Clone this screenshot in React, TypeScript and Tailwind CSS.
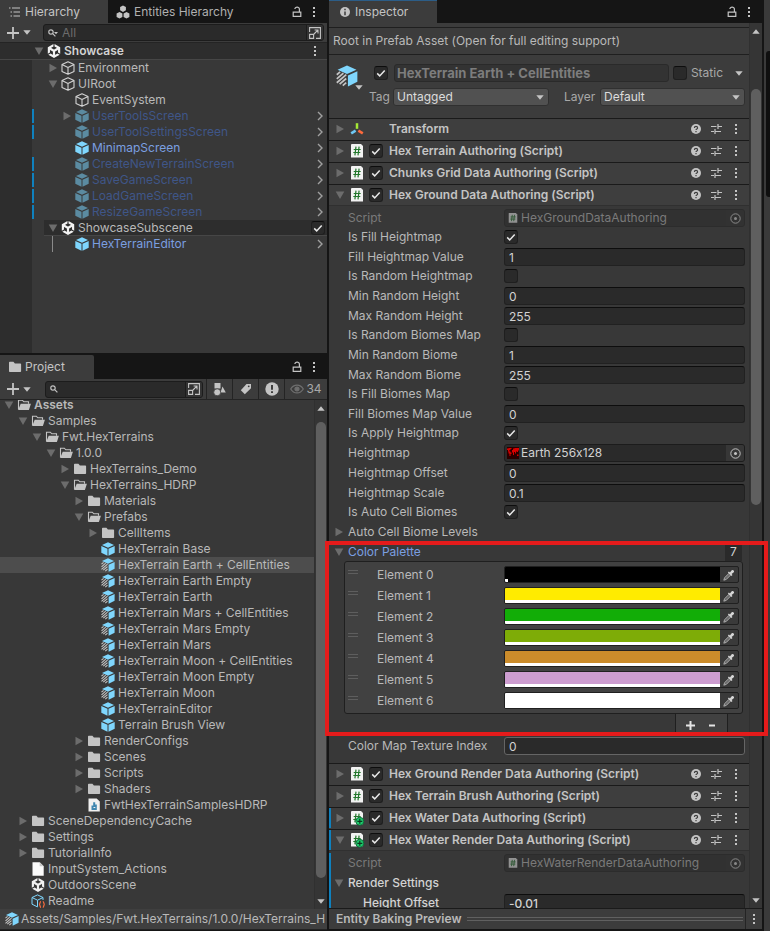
import { useState } from "react";
import type { ReactNode } from "react";
import clsx from "clsx";
import { SiUnity } from "react-icons/si";

type IconName =
  | "cube"
  | "prefab"
  | "prefabOff"
  | "variant"
  | "unity"
  | "folder"
  | "folderOpen"
  | "assembly"
  | "file"
  | "readme";

type TreeItem = {
  label: string;
  depth: number;
  icon: IconName;
  open?: boolean;
  bold?: boolean;
  selected?: boolean;
};

const HIERARCHY: (TreeItem & { color?: string; marked?: boolean; next?: boolean })[] = [
  { label: "Environment", depth: 1, icon: "cube", open: false },
  { label: "UIRoot", depth: 1, icon: "cube", open: true },
  { label: "EventSystem", depth: 2, icon: "cube" },
  { label: "UserToolsScreen", depth: 2, icon: "prefabOff", open: false, color: "text-[#3f5688]", marked: true, next: true },
  { label: "UserToolSettingsScreen", depth: 2, icon: "prefabOff", color: "text-[#3f5688]", marked: true, next: true },
  { label: "MinimapScreen", depth: 2, icon: "prefab", color: "text-[#7b9fe0]", next: true },
  { label: "CreateNewTerrainScreen", depth: 2, icon: "prefabOff", color: "text-[#3f5688]", marked: true, next: true },
  { label: "SaveGameScreen", depth: 2, icon: "prefabOff", color: "text-[#3f5688]", marked: true, next: true },
  { label: "LoadGameScreen", depth: 2, icon: "prefabOff", color: "text-[#3f5688]", marked: true, next: true },
  { label: "ResizeGameScreen", depth: 2, icon: "prefabOff", color: "text-[#3f5688]", marked: true, next: true },
];

const ASSETS: TreeItem[] = [
  { label: "Assets", depth: 0, icon: "folderOpen", open: true, bold: true },
  { label: "Samples", depth: 1, icon: "folderOpen", open: true },
  { label: "Fwt.HexTerrains", depth: 2, icon: "folderOpen", open: true },
  { label: "1.0.0", depth: 3, icon: "folderOpen", open: true },
  { label: "HexTerrains_Demo", depth: 4, icon: "folder", open: false },
  { label: "HexTerrains_HDRP", depth: 4, icon: "folderOpen", open: true },
  { label: "Materials", depth: 5, icon: "folder", open: false },
  { label: "Prefabs", depth: 5, icon: "folderOpen", open: true },
  { label: "CellItems", depth: 6, icon: "folder", open: false },
  { label: "HexTerrain Base", depth: 6, icon: "prefab" },
  { label: "HexTerrain Earth + CellEntities", depth: 6, icon: "variant", selected: true },
  { label: "HexTerrain Earth Empty", depth: 6, icon: "variant" },
  { label: "HexTerrain Earth", depth: 6, icon: "variant" },
  { label: "HexTerrain Mars + CellEntities", depth: 6, icon: "variant" },
  { label: "HexTerrain Mars Empty", depth: 6, icon: "variant" },
  { label: "HexTerrain Mars", depth: 6, icon: "variant" },
  { label: "HexTerrain Moon + CellEntities", depth: 6, icon: "variant" },
  { label: "HexTerrain Moon Empty", depth: 6, icon: "variant" },
  { label: "HexTerrain Moon", depth: 6, icon: "variant" },
  { label: "HexTerrainEditor", depth: 6, icon: "prefab" },
  { label: "Terrain Brush View", depth: 6, icon: "prefab" },
  { label: "RenderConfigs", depth: 5, icon: "folder", open: false },
  { label: "Scenes", depth: 5, icon: "folder", open: false },
  { label: "Scripts", depth: 5, icon: "folder", open: false },
  { label: "Shaders", depth: 5, icon: "folder", open: false },
  { label: "FwtHexTerrainSamplesHDRP", depth: 5, icon: "assembly" },
  { label: "SceneDependencyCache", depth: 1, icon: "folder", open: false },
  { label: "Settings", depth: 1, icon: "folder", open: false },
  { label: "TutorialInfo", depth: 1, icon: "folder", open: false },
  { label: "InputSystem_Actions", depth: 1, icon: "file" },
  { label: "OutdoorsScene", depth: 1, icon: "unity" },
  { label: "Readme", depth: 1, icon: "readme" },
];

const PALETTE = ["#000000", "#ffeb00", "#12ad07", "#7eac07", "#cb8c2b", "#cd9dd0", "#ffffff"];

const INDENT = ["pl-[3px]", "pl-[17px]", "pl-[31px]", "pl-[45px]", "pl-[59px]", "pl-[73px]", "pl-[87px]"];

function Cube({ kind, className = "size-[14px]" }: { kind: IconName; className?: string }) {
  if (kind === "cube") {
    return (
      <svg viewBox="0 0 14 14" className={className} fill="none" stroke="#d2d2d2" strokeWidth="1.1" strokeLinejoin="round">
        <path d="M7 .8 13 3.6v6.8L7 13.3 1 10.4V3.6zM1 3.6l6 2.9 6-2.9M7 6.5v6.8" />
      </svg>
    );
  }
  if (kind === "variant") {
    return (
      <svg viewBox="0 0 14 14" className={className}>
        <path d="M7 .3 13 3 7 5.8 1 3z" fill="#7fd6fd" />
        <path d="M7.6 6.7 13.6 4v6.7l-6 3z" fill="#7fd6fd" />
        <path d="M.5 6.2 2.6 4.4M.5 8.8l4.2-3.6M.5 11.3l6-5.2M2.3 12.2l4.2-3.6M4.3 13.1l2.2-1.9" stroke="#c4c4c4" strokeWidth="1.1" />
      </svg>
    );
  }
  const fill = kind === "prefab" ? "#7fd6fd" : "#5b8ba1";
  return (
    <svg viewBox="0 0 14 14" className={className} fill={fill}>
      <path d="M7 .3 13 3 7 5.8 1 3z" />
      <path d="M.3 4l6.2 2.7v7L.3 10.7z" />
      <path d="M13.7 4 7.5 6.7v7l6.2-3z" />
    </svg>
  );
}

function TreeIcon({ name }: { name: IconName }) {
  switch (name) {
    case "unity":
      return <SiUnity className="size-[14px] text-[#f2f2f2]" />;
    case "folder":
      return (
        <svg viewBox="0 0 14 14" className="size-[14px]" fill="#c4c4c4">
          <path d="M1 2.5a.8.8 0 0 1 .8-.8h3.6l1.5 1.7h5.4a.8.8 0 0 1 .8.8v7.1a.8.8 0 0 1-.8.8H1.8a.8.8 0 0 1-.8-.8z" />
        </svg>
      );
    case "folderOpen":
      return (
        <svg viewBox="0 0 14 14" className="size-[14px]">
          <path d="M1.5 11.5V2.2h3.8l1.5 1.6h4.7v2" fill="none" stroke="#c4c4c4" strokeWidth="1.1" />
          <path d="M3.7 5.8h10.2l-2 6.3H1.2z" fill="#c4c4c4" />
        </svg>
      );
    case "assembly":
      return (
        <svg viewBox="0 0 14 14" className="size-[14px]">
          <path d="M1.5.5h8.2L12.8 3.5v10H1.5z" fill="#f0f0f0" />
          <path d="M6.2 4.2h2v2.200h1.600v5.600H4.500V7.500h1.700z" fill="#3f86b0" />
          <path d="M6.500 9.500h1.800" stroke="#f0f0f0" strokeWidth="1" fill="none" />
        </svg>
      );
    case "file":
      return (
        <svg viewBox="0 0 14 14" className="size-[14px]">
          <path d="M1.5.3h7.2l4 4v9.5H1.5z" fill="#fbfbfb" />
          <path d="M8.7.3v4h4z" fill="#c6c6c6" />
        </svg>
      );
    case "readme":
      return (
        <svg viewBox="0 0 14 14" className="size-[14px]" fill="none">
          <path d="M12 6V3.5L6.5.9 1 3.5v6.7l5.5 2.7M1 3.5l5.5 2.7L12 3.5M6.5 6.2v6.6" stroke="#7fd6fd" strokeWidth="1" />
          <path d="M10 7.5c-1.4 0-.6 2.6-1.8 2.9 1.2.3.4 2.9 1.8 2.9M11.8 7.5c1.4 0 .6 2.6 1.8 2.9-1.2.3-.4 2.9-1.8 2.9" stroke="#ff6e40" strokeWidth="1.2" />
        </svg>
      );
    default:
      return <Cube kind={name} />;
  }
}

function Arrow({ open }: { open?: boolean }) {
  return (
    <svg viewBox="0 0 10 10" className="size-[10px]" fill="#6c6c6c">
      {open ? <path d="M.7 1.5h8.6L5 9z" /> : <path d="M1.5.8v8.4L9 5z" />}
    </svg>
  );
}

function Foldout({ open, label }: { open?: boolean; label: string }) {
  return (
    <button type="button" aria-label={label} aria-expanded={open} className="flex size-[11px] shrink-0 items-center justify-center">
      <Arrow open={open} />
    </button>
  );
}

function TreeLabel({ item, className }: { item: TreeItem; className?: string }) {
  return (
    <>
      {item.open === undefined ? <span className="w-[11px] shrink-0" /> : <Foldout open={item.open} label={item.label} />}
      <span className="ml-[3px] mr-[3px] shrink-0">
        <TreeIcon name={item.icon} />
      </span>
      <span className={clsx("whitespace-nowrap", item.bold && "font-semibold", className)}>{item.label}</span>
    </>
  );
}

function LockIcon() {
  return (
    <svg viewBox="0 0 10 12" className="h-[12px] w-[10px]" fill="none" stroke="#c4c4c4" strokeWidth="1.2">
      <path d="M1.2 6.2h7.6v4.2H1.2zM7.4 6V3.2C7.4 1.8 6.3 1.2 5.1 1.2S2.9 1.8 2.9 3" />
    </svg>
  );
}

function Kebab() {
  return (
    <svg viewBox="0 0 4 12" className="h-[12px] w-[4px]" fill="#c4c4c4">
      <path d="M1 1h2v2H1zM1 5h2v2H1zM1 9h2v2H1z" />
    </svg>
  );
}

function Caret({ className }: { className?: string }) {
  return (
    <svg viewBox="0 0 8 5" className={clsx("h-[5px] w-[8px]", className)} fill="#c4c4c4">
      <path d="M.3.3h7.4L4 4.7z" />
    </svg>
  );
}

function TabTools() {
  return (
    <div className="ml-auto flex items-center gap-[10px] pr-[11px]">
      <button type="button" aria-label="Lock">
        <LockIcon />
      </button>
      <button type="button" aria-label="Tab menu">
        <Kebab />
      </button>
    </div>
  );
}

function AddButton() {
  return (
    <button type="button" aria-label="Create" className="flex w-[43px] shrink-0 items-center gap-[4px] pl-[7px]">
      <svg viewBox="0 0 12 12" className="size-[12px]" stroke="#c4c4c4" strokeWidth="1.8">
        <path d="M6 0v12M0 6h12" />
      </svg>
      <Caret />
    </button>
  );
}

function SearchIcon({ menu }: { menu?: boolean }) {
  return (
    <svg viewBox="0 0 10 8" className="h-[8px] w-[10px] shrink-0" fill="none" stroke="#c4c4c4" strokeWidth="1.2">
      <circle cx="3" cy="3" r="2.2" />
      <path d="M4.7 4.7 7.4 7.4" />
      {menu && <path d="M6 3h4L8 5.2z" fill="#c4c4c4" stroke="none" />}
    </svg>
  );
}

function SearchField({ label, placeholder, menu }: { label: string; placeholder?: string; menu?: boolean }) {
  const [query, setQuery] = useState("");
  return (
    <div className="flex h-[17px] min-w-0 flex-1 items-center overflow-hidden rounded-[3px] border border-[#1c1c1c] bg-[#2a2a2a]">
      <div className="flex min-w-0 flex-1 items-center gap-1 pl-1">
        <SearchIcon menu={menu} />
        <input
          type="text"
          aria-label={label}
          placeholder={placeholder}
          value={query}
          onChange={(e) => setQuery(e.target.value)}
          className="w-full min-w-0 bg-transparent text-[#c4c4c4] outline-none placeholder:text-[#6c6c6c]"
        />
      </div>
      <button type="button" aria-label="Open in search window" className="flex h-full w-[17px] shrink-0 items-center justify-center border-l border-[#1c1c1c] bg-[#333333]">
        <svg viewBox="0 0 12 12" className="size-[12px]" fill="none" stroke="#c4c4c4" strokeWidth="1.1">
          <path d="M.6 5V.6h10.8v10.8H7M.6 7.4h4v4h-4zM5 7l3.8-3.8M5.6 3h3.4v3.4" />
        </svg>
      </button>
    </div>
  );
}

function Check({ id, label, defaultChecked }: { id?: string; label?: string; defaultChecked?: boolean }) {
  return (
    <span className="relative flex size-[14px] shrink-0">
      <input
        id={id}
        type="checkbox"
        aria-label={label}
        defaultChecked={defaultChecked}
        className="peer size-[14px] appearance-none rounded-[3px] border border-[#1f1f1f] border-t-[#0d0d0d] bg-[#2a2a2a]"
      />
      <svg
        viewBox="0 0 14 14"
        className="pointer-events-none absolute inset-0 hidden size-[14px] peer-checked:block"
        fill="none"
        stroke="#e8e8e8"
        strokeWidth="1.5"
      >
        <path d="M3.2 7.4 5.7 9.9 10.7 4.4" />
      </svg>
    </span>
  );
}

function Chevron() {
  return (
    <button type="button" aria-label="Open prefab" className="ml-auto mr-1">
      <svg viewBox="0 0 6 10" className="h-[10px] w-[6px]" fill="none" stroke="#a0a0a0" strokeWidth="1.4">
        <path d="M1 1l4 4-4 4" />
      </svg>
    </button>
  );
}

function Hierarchy() {
  return (
    <section className="flex h-[353px] flex-col bg-[#383838]">
      <div className="flex h-[23px] shrink-0 items-center bg-[#151515]">
        <button type="button" className="flex h-full w-[108px] items-center gap-[5px] bg-[#3c3c3c] pl-[9px] text-[#c4c4c4]">
          <svg viewBox="0 0 11 10" className="h-[10px] w-[11px]" stroke="#c4c4c4" strokeWidth="1.2">
            <path d="M0 1h1.5M3 1h8M1.5 5H3M4.5 5H11M1.5 9H3M4.5 9H11" />
          </svg>
          Hierarchy
        </button>
        <button type="button" className="flex h-full items-center gap-1 pl-[8px] text-[#b0b0b0]">
          <svg viewBox="0 0 14 14" className="size-[14px]" fill="#c4c4c4">
            <path d="M7 .5 9.9 2v3.3L7 6.9 4.1 5.3V2zM3.5 7l2.9 1.6v3.3L3.5 13.5.6 11.9V8.6zM10.5 7l2.9 1.6v3.3l-2.9 1.6-2.9-1.6V8.6z" />
          </svg>
          Entities Hierarchy
        </button>
        <TabTools />
      </div>
      <div className="flex h-[20px] shrink-0 items-center border-b border-[#242424] bg-[#3c3c3c] pr-[3px]">
        <AddButton />
        <SearchField label="Search hierarchy" placeholder="All" menu />
      </div>
      <div className="flex min-h-0 min-w-0 flex-1 flex-col bg-[linear-gradient(to_right,#2d2d2d_32px,#383838_32px)]">
        <div className="flex h-[17px] items-center border-b border-[#464646] bg-[#2d2d2d] pl-[33px] pr-[10px] text-[#d2d2d2]">
          <TreeLabel item={{ label: "Showcase", depth: 0, icon: "unity", open: true, bold: true }} />
          <button type="button" aria-label="Scene menu" className="ml-auto">
            <Kebab />
          </button>
        </div>
        <ul className="pl-[30px]">
          {HIERARCHY.map((item) => (
            <li key={item.label} className="flex h-[16px] items-center">
              <span className={clsx("ml-[2px] -mr-[4px] h-[14px] w-[2px] shrink-0", item.marked && "bg-[#0f81be]")} />
              <div className={clsx("flex min-w-0 flex-1 items-center", INDENT[item.depth])}>
                <TreeLabel item={item} className={item.color ?? "text-[#b9b9b9]"} />
                {item.next && <Chevron />}
              </div>
            </li>
          ))}
        </ul>
        <div className="ml-[44px] flex h-[16px] items-center border-b border-[#464646] bg-[#2d2d2d] pl-[3px] pr-[2px] text-[#b9b9b9]">
          <TreeLabel item={{ label: "ShowcaseSubscene", depth: 1, icon: "unity", open: true }} />
          <span className="ml-auto flex">
            <Check label="Open subscene" defaultChecked />
          </span>
        </div>
        <div className="ml-[52px] flex h-[16px] items-center border-l border-[#8a8a8a] pl-[8px]">
          <TreeLabel item={{ label: "HexTerrainEditor", depth: 2, icon: "prefab" }} className="text-[#7b9fe0]" />
          <Chevron />
        </div>
      </div>
    </section>
  );
}

function Scrollbar({ thumb }: { thumb: string }) {
  return (
    <div className="flex w-[13px] shrink-0 flex-col items-center border-l border-[#303030] bg-[#353535]">
      <Caret className="mt-[6px] rotate-180" />
      <div className={clsx("w-[10px] rounded-[5px] bg-[#5f5f5f]", thumb)} />
      <Caret className="mt-auto mb-[5px]" />
    </div>
  );
}

function Project() {
  return (
    <section className="flex min-h-0 flex-1 flex-col bg-[#383838]">
      <div className="flex h-[24px] shrink-0 items-center bg-[#151515]">
        <button type="button" className="flex h-full w-[94px] items-center gap-[3px] rounded-tr-[2px] bg-[#3c3c3c] pl-2 text-[#c4c4c4]">
          <TreeIcon name="folder" />
          Project
        </button>
        <TabTools />
      </div>
      <div className="flex h-[21px] shrink-0 items-center border-b border-[#242424] bg-[#3c3c3c]">
        <AddButton />
        <div className="flex min-w-0 flex-1 pl-[2px] pr-[3px]">
          <SearchField label="Search project" />
        </div>
        <button type="button" aria-label="Search by type" className="flex h-full w-[26px] items-center justify-center border-l border-[#242424]">
          <svg viewBox="0 0 13 13" className="size-[13px]" fill="#c4c4c4">
            <path d="M1.5 0h6v5.5h-6zM9.5 3.5 12.8 9.5H7.5z" />
            <circle cx="4.2" cy="9.3" r="3.5" stroke="#3c3c3c" strokeWidth=".8" />
          </svg>
        </button>
        <button type="button" aria-label="Search by label" className="flex h-full w-[26px] items-center justify-center border-l border-[#242424]">
          <svg viewBox="0 0 12 12" className="size-[12px]">
            <path d="M6.5 1h4.5v4.2L4.8 11.2.8 7.2z" fill="#c4c4c4" />
            <circle cx="8.7" cy="3.3" r=".9" fill="#3c3c3c" />
          </svg>
        </button>
        <button type="button" aria-label="Show log entries" className="flex h-full w-[26px] items-center justify-center border-l border-[#242424]">
          <svg viewBox="0 0 14 14" className="size-[14px]">
            <circle cx="7" cy="7" r="6.7" fill="#c4c4c4" />
            <path d="M7 3v4.8M7 9.2v1.9" stroke="#3c3c3c" strokeWidth="2" />
          </svg>
        </button>
        <button type="button" className="flex h-full w-[43px] items-center justify-center gap-[2px] border-l border-[#242424] text-[#a8a8a8]">
          <svg viewBox="0 0 14 10" className="h-[10px] w-[14px]" fill="none" stroke="#6f6f6f" strokeWidth="1.2">
            <path d="M.7 5C3.8-.2 10.2-.2 13.3 5 10.2 10.2 3.8 10.2.7 5z" />
            <circle cx="7" cy="5" r="2" fill="#6f6f6f" />
          </svg>
          34
        </button>
      </div>
      <div className="flex min-h-0 flex-1">
        <ul className="min-w-0 flex-1 overflow-hidden">
          {ASSETS.map((item, i) => (
            <li
              key={i}
              className={clsx(
                "flex h-[16px] items-center text-[#b9b9b9] first:-mt-[3px]",
                INDENT[item.depth],
                item.selected && "bg-[#4d4d4d]",
              )}
            >
              <TreeLabel item={item} />
            </li>
          ))}
        </ul>
        <Scrollbar thumb="mt-[11px] h-[456px]" />
      </div>
      <div className="flex h-[21px] shrink-0 items-center gap-[2px] overflow-hidden border-b border-[#242424] bg-[#3f3f3f] pl-[5px] text-[#b9b9b9]">
        <Cube kind="variant" className="size-[14px] shrink-0" />
        <span className="whitespace-nowrap">Assets/Samples/Fwt.HexTerrains/1.0.0/HexTerrains_H</span>
      </div>
    </section>
  );
}

function ScriptIcon({ added, dim }: { added?: boolean; dim?: boolean }) {
  return (
    <svg viewBox="0 0 14 16" className={clsx("shrink-0", dim ? "h-[12px] w-[10px] opacity-50" : "h-[16px] w-[14px]")}>
      <path d="M1.5 1h9.5l2 2v11.5H1V1.5z" fill="#f2f2f2" />
      <path d="M6 3.6 4.9 12.4M9.1 3.6 8 12.4M3.7 6.5h7M3.3 9.5h7" stroke="#22772c" strokeWidth="1.2" />
      {added && (
        <>
          <circle cx="9.8" cy="11.3" r="4" fill="#1fc96c" stroke="#0d5b31" strokeWidth=".8" />
          <path d="M9.8 8.8v5M7.3 11.3h5" stroke="#0b3a20" strokeWidth="1.2" />
        </>
      )}
    </svg>
  );
}

function TransformIcon() {
  return (
    <svg viewBox="0 0 14 16" className="h-[16px] w-[14px] shrink-0" strokeWidth="2.5" strokeLinecap="butt">
      <path d="M7 2.2v5.6" stroke="#a5e836" />
      <path d="M5.6 9.6 1.2 12.4" stroke="#6fc8f5" />
      <path d="M8.4 9.6l4.4 2.8" stroke="#ff6a3c" />
    </svg>
  );
}

type ComponentHeaderProps = {
  title: string;
  open?: boolean;
  transform?: boolean;
  added?: boolean;
};

function ComponentHeader({ title, open = false, transform, added }: ComponentHeaderProps) {
  return (
    <div
      className={clsx(
        "flex h-[22px] items-center border-t border-[#1a1a1a] bg-[#3e3e3e]",
        open ? "border-b border-b-[#303030]" : "pb-px",
      )}
    >
      <span className={clsx("h-[20px] w-[2px] shrink-0", added && "bg-[#0f81be]")} />
      <span className="ml-[3px]">
        <Foldout open={open} label={title} />
      </span>
      <span className="ml-[5px] mr-[5px]">{transform ? <TransformIcon /> : <ScriptIcon added={added} />}</span>
      {transform ? <span className="w-[14px] shrink-0" /> : <Check label={`Enable ${title}`} defaultChecked />}
      <h2 className="ml-[6px] flex-1 truncate font-semibold text-[#c4c4c4]">{title}</h2>
      <div className="flex items-center pr-[3px]">
        <button type="button" aria-label="Help" className="flex w-5 justify-center">
          <svg viewBox="0 0 10 10" className="size-[10px]">
            <circle cx="5" cy="5" r="5" fill="#c4c4c4" />
            <path d="M3.4 3.9c0-2 3.2-2 3.2 0 0 1.1-1.6 1-1.6 2.2M5 7v1.2" fill="none" stroke="#3e3e3e" strokeWidth="1.2" />
          </svg>
        </button>
        <button type="button" aria-label="Presets" className="flex w-5 justify-center">
          <svg viewBox="0 0 12 12" className="size-[12px]" stroke="#c4c4c4" strokeWidth="1.2">
            <path d="M1 3.5h5.5M8 3.5h4M8 1v5M1 8.5h3M5.5 8.5H11M5 6v5" />
          </svg>
        </button>
        <button type="button" aria-label={`${title} menu`} className="flex w-5 justify-center">
          <Kebab />
        </button>
      </div>
    </div>
  );
}

function Field({ label, htmlFor, dim, children }: { label: string; htmlFor?: string; dim?: boolean; children: ReactNode }) {
  return (
    <div className="flex h-[20px] items-center pl-[19px] pr-1">
      <label htmlFor={htmlFor} className={clsx("w-[156px] shrink-0 whitespace-nowrap", dim ? "text-[#7a7a7a]" : "text-[#b9b9b9]")}>
        {label}
      </label>
      {children}
    </div>
  );
}

function TextField({ label, value, focused }: { label: string; value: string; focused?: boolean }) {
  const id = label.toLowerCase().replace(/ /g, "-");
  return (
    <Field label={label} htmlFor={id}>
      <input
        id={id}
        type="text"
        defaultValue={value}
        className={clsx(
          "h-[18px] min-w-0 flex-1 rounded-[3px] border bg-[#2a2a2a] px-1 text-[#d2d2d2] outline-none",
          focused ? "border-[#656565]" : "border-[#212121] border-t-[#0d0d0d]",
        )}
      />
    </Field>
  );
}

function CheckField({ label, checked }: { label: string; checked?: boolean }) {
  const id = label.toLowerCase().replace(/ /g, "-");
  return (
    <div className="flex h-[19px] items-center pb-px pl-[19px]">
      <label htmlFor={id} className="w-[156px] shrink-0 whitespace-nowrap text-[#b9b9b9]">
        {label}
      </label>
      <Check id={id} defaultChecked={checked} />
    </div>
  );
}

function ObjectField({ label, value, icon, dim }: { label: string; value: string; icon: ReactNode; dim?: boolean }) {
  return (
    <Field label={label} dim={dim}>
      <div
        className={clsx(
          "flex h-[18px] min-w-0 flex-1 items-center overflow-hidden rounded-[3px] border",
          dim ? "border-[#2c2c2c] bg-[#313131] text-[#7a7a7a]" : "border-[#1c1c1c] bg-[#2a2a2a] text-[#d2d2d2]",
        )}
      >
        <span className={clsx("flex w-[16px] shrink-0", dim ? "justify-center" : "pl-[2px]")}>{icon}</span>
        <span className="flex-1 truncate">{value}</span>
        <button
          type="button"
          aria-label={`Select ${label}`}
          disabled={dim}
          className={clsx("flex h-full w-[18px] items-center justify-center", dim ? "bg-[#353535] opacity-60" : "bg-[#373737]")}
        >
          <svg viewBox="0 0 11 11" className="size-[11px]" fill="none" stroke="#c4c4c4">
            <circle cx="5.5" cy="5.5" r="4.7" />
            <circle cx="5.5" cy="5.5" r="1.5" fill="#c4c4c4" stroke="none" />
          </svg>
        </button>
      </div>
    </Field>
  );
}

function EarthThumb() {
  return (
    <svg viewBox="0 0 12 12" className="size-[12px]">
      <path d="M0 0h12v12H0z" fill="#2a0000" />
      <path d="M0 1.5h1.5V1h3v1h-1v1h-1v1.500h1v1h1v1.500h-1V9h-1V6.500h-1V4.500H1V3H0zM6 1.500h1.500V1H12v2.500h-1v1.500h-1V4.500H9v2H8V5H7v3H6V5.500H5V3h1zM10 7.500h1.500v1.500H10z" fill="#d90000" />
    </svg>
  );
}

function ColorPalette() {
  return (
    <section className="relative pb-[2px]">
      <div className="flex h-[19px] items-center pl-[4px] pr-[7px]">
        <Foldout open label="Color Palette" />
        <label htmlFor="palette-size" className="ml-1 flex-1 text-[#7b9fe0]">
          Color Palette
        </label>
        <input
          id="palette-size"
          type="text"
          defaultValue="7"
          className="h-[18px] w-[17px] rounded-t-[3px] bg-[#2a2a2a] text-center text-[#d2d2d2] outline-none"
        />
      </div>
      <ul className="ml-[15px] mr-[6px] rounded-[3px] border border-[#1f1f1f] bg-[#414141] py-[2px]">
        {PALETTE.map((color, i) => (
          <li key={color} className="flex h-[21px] items-center pl-[3px] pr-[3px]">
            <span className="mb-[5px] h-[4px] w-[10px] border-y border-[#5e5e5e]" />
            <span className="ml-[19px] w-[127px] shrink-0 text-[#b9b9b9]">Element {i}</span>
            <div className="flex h-[17px] min-w-0 flex-1 overflow-hidden rounded-[2px] border border-[#202020] bg-[#3a3a3a]">
              <button
                type="button"
                aria-label={`Element ${i} color`}
                className="flex min-w-0 flex-1 items-end"
                style={{ backgroundColor: color }}
              >
                <span className={clsx("h-[3px] bg-white", i === 0 ? "w-[3px]" : "w-full")} />
              </button>
              <button type="button" aria-label={`Pick element ${i} color`} className="flex w-[18px] items-center justify-center">
                <svg viewBox="0 0 12 12" className="size-[12px]">
                  <path d="M.8 11.2l.8-2.5 4.5-4.5 1.7 1.7-4.5 4.5z" fill="#6a6a6a" stroke="#b0b0b0" strokeWidth=".9" />
                  <path d="M4.9 3.5l1-1 1 .9L8.7 1.2c1.2-1.1 3.2.9 2.1 2.1L8.6 5.1l.9 1-1 1z" fill="#d6d6d6" />
                </svg>
              </button>
            </div>
          </li>
        ))}
      </ul>
      <div className="mr-[21px] ml-auto flex h-[20px] w-[53px] border-x border-[#1f1f1f] bg-[#414141] pt-[2px]">
        <button type="button" aria-label="Add element" className="flex flex-1 items-center justify-center pl-1">
          <svg viewBox="0 0 9 9" className="size-[9px]" stroke="#e4e4e4" strokeWidth="2">
            <path d="M4.5 0v9M0 4.5h9" />
          </svg>
        </button>
        <button type="button" aria-label="Remove element" className="flex flex-1 items-center justify-center pr-[4px]">
          <svg viewBox="0 0 6 9" className="h-[9px] w-[6px]" stroke="#e4e4e4" strokeWidth="2">
            <path d="M0 4.5h6" />
          </svg>
        </button>
      </div>
      {/* highlight frame around the palette */}
      <div className="pointer-events-none absolute -top-px -right-[19px] bottom-0 -left-[4px] border-4 border-[#e51b1b]" />
    </section>
  );
}

function Dropdown({ id, value, className }: { id: string; value: string; className?: string }) {
  return (
    <span className={clsx("relative flex", className)}>
      <select
        id={id}
        defaultValue={value}
        className="h-[18px] w-full appearance-none rounded-[3px] border border-[#303030] bg-[#515151] px-[3px] text-[#dcdcdc] outline-none"
      >
        <option>{value}</option>
      </select>
      <Caret className="pointer-events-none absolute top-[7px] right-[5px]" />
    </span>
  );
}

function ObjectHeader() {
  return (
    <div className="flex h-[64px] border-t border-[#1f1f1f] bg-[#3c3c3c] pr-[4px] pl-[7px]">
      <button type="button" aria-label="Object icon" className="relative mt-[10px] flex h-[28px] w-[28px] shrink-0 items-start">
        <Cube kind="variant" className="size-[22px]" />
        <Caret className="absolute right-px bottom-[3px]" />
      </button>
      <div className="min-w-0 flex-1 pt-[9px]">
        <div className="flex h-[18px] items-center pl-[10px]">
          <Check label="Active" defaultChecked />
          <input
            type="text"
            aria-label="Object name"
            readOnly
            value="HexTerrain Earth + CellEntities"
            className="ml-[6px] h-[18px] min-w-0 flex-1 rounded-[3px] border border-[#2a2a2a] bg-[#333333] px-[2px] text-[13px] font-bold text-[#7d7d7d] outline-none"
          />
          <label className="ml-[4px] flex items-center gap-1 text-[#a8a8a8]">
            <Check />
            Static
          </label>
          <button type="button" aria-label="Static options" className="mr-[2px] ml-[12px]">
            <Caret />
          </button>
        </div>
        <div className="mt-[6px] flex h-[18px] items-center pl-[5px] text-[#a8a8a8]">
          <label htmlFor="tag" className="w-[24px] shrink-0">
            Tag
          </label>
          <Dropdown id="tag" value="Untagged" className="min-w-0 flex-[156]" />
          <label htmlFor="layer" className="ml-[15px] w-[36px] shrink-0">
            Layer
          </label>
          <Dropdown id="layer" value="Default" className="min-w-0 flex-[145]" />
        </div>
      </div>
    </div>
  );
}

function Inspector() {
  return (
    <section className="flex min-w-0 flex-1 flex-col bg-[#383838]">
      <div className="flex h-[23px] shrink-0 items-center bg-[#151515]">
        <button type="button" className="flex h-full w-[108px] items-center gap-[5px] border-t border-[#2c5d87] bg-[#3c3c3c] pl-[11px] text-[#c4c4c4]">
          <svg viewBox="0 0 10 10" className="size-[10px]">
            <circle cx="5" cy="5" r="5" fill="#c4c4c4" />
            <path d="M5 1.8v1.5M5 4.4v3.8" stroke="#3c3c3c" strokeWidth="1.5" />
          </svg>
          Inspector
        </button>
        <TabTools />
      </div>
      <div className="flex min-h-0 flex-1">
        <div className="min-w-0 flex-1 overflow-y-clip">
          <div className="h-[4px] bg-[#3c3c3c]" />
          <p className="h-[27px] border-t border-[#1f1f1f] bg-[#3c3c3c] pl-[4px] leading-[26px] whitespace-nowrap text-[#b9b9b9]">
            Root in Prefab Asset (Open for full editing support)
          </p>
          <ObjectHeader />
          <ComponentHeader title="Transform" transform />
          <ComponentHeader title="Hex Terrain Authoring (Script)" />
          <ComponentHeader title="Chunks Grid Data Authoring (Script)" />
          <ComponentHeader title="Hex Ground Data Authoring (Script)" open />
          <div className="pt-[2px]">
            <ObjectField label="Script" value="HexGroundDataAuthoring" icon={<ScriptIcon dim />} dim />
            <CheckField label="Is Fill Heightmap" checked />
            <TextField label="Fill Heightmap Value" value="1" />
            <CheckField label="Is Random Heightmap" />
            <TextField label="Min Random Height" value="0" />
            <TextField label="Max Random Height" value="255" />
            <CheckField label="Is Random Biomes Map" />
            <TextField label="Min Random Biome" value="1" />
            <TextField label="Max Random Biome" value="255" />
            <CheckField label="Is Fill Biomes Map" />
            <TextField label="Fill Biomes Map Value" value="0" />
            <CheckField label="Is Apply Heightmap" checked />
            <ObjectField label="Heightmap" value="Earth 256x128" icon={<EarthThumb />} />
            <TextField label="Heightmap Offset" value="0" />
            <TextField label="Heightmap Scale" value="0.1" />
            <CheckField label="Is Auto Cell Biomes" checked />
            <div className="flex h-[20px] items-center pl-[4px] text-[#b9b9b9]">
              <Foldout open={false} label="Auto Cell Biome Levels" />
              <span className="ml-1">Auto Cell Biome Levels</span>
            </div>
            <ColorPalette />
            <div className="pb-[7px]">
              <TextField label="Color Map Texture Index" value="0" focused />
            </div>
          </div>
          <ComponentHeader title="Hex Ground Render Data Authoring (Script)" />
          <ComponentHeader title="Hex Terrain Brush Authoring (Script)" />
          <ComponentHeader title="Hex Water Data Authoring (Script)" added />
          <ComponentHeader title="Hex Water Render Data Authoring (Script)" open added />
          <div className="mt-[2px] shadow-[inset_2px_0_0_#0f81be]">
            <ObjectField label="Script" value="HexWaterRenderDataAuthoring" icon={<ScriptIcon dim />} dim />
            <div className="flex h-[20px] items-center pl-[4px] font-medium text-[#d2d2d2]">
              <Foldout open label="Render Settings" />
              <span className="ml-1">Render Settings</span>
            </div>
            <div className="flex h-[20px] items-center pr-1 pl-[34px] font-medium text-[#d2d2d2]">
              <label htmlFor="height-offset" className="w-[141px] shrink-0">
                Height Offset
              </label>
              <input
                id="height-offset"
                type="text"
                defaultValue="-0.01"
                className="h-[18px] min-w-0 flex-1 rounded-[3px] border border-[#212121] border-t-[#0d0d0d] bg-[#2a2a2a] px-1 outline-none"
              />
            </div>
          </div>
        </div>
        <Scrollbar thumb="mt-[55px] h-[416px]" />
      </div>
      <div className="flex h-[21px] shrink-0 items-center border-t border-[#1a1a1a] bg-[#3c3c3c] pl-[7px]">
        <h2 className="font-semibold text-[#b9b9b9]">Entity Baking Preview</h2>
        <div className="ml-[5px] h-[4px] flex-1 border-y border-[#606060]" />
        <button type="button" aria-label="Preview menu" className="ml-[2px] flex h-full w-[17px] items-center justify-center border-l border-[#242424]">
          <Kebab />
        </button>
      </div>
    </section>
  );
}

export default function App() {
  return (
    <main className="flex h-screen overflow-hidden bg-[#151515] font-['Inter',sans-serif] text-[12px] leading-[16px] [font-feature-settings:'calt'_0]">
      <div className="flex w-[327px] shrink-0 flex-col gap-[2px] pb-px">
        <Hierarchy />
        <Project />
      </div>
      <div className="ml-[2px] flex min-w-0 flex-1 pb-[2px]">
        <Inspector />
      </div>
      <div className="ml-[2px] w-[6px] shrink-0 bg-[#3a3a3a] pt-[51px]">
        <div className="ml-[2px] h-[146px] rounded-l-[3px] bg-[#0f0f0f]" />
      </div>
    </main>
  );
}
